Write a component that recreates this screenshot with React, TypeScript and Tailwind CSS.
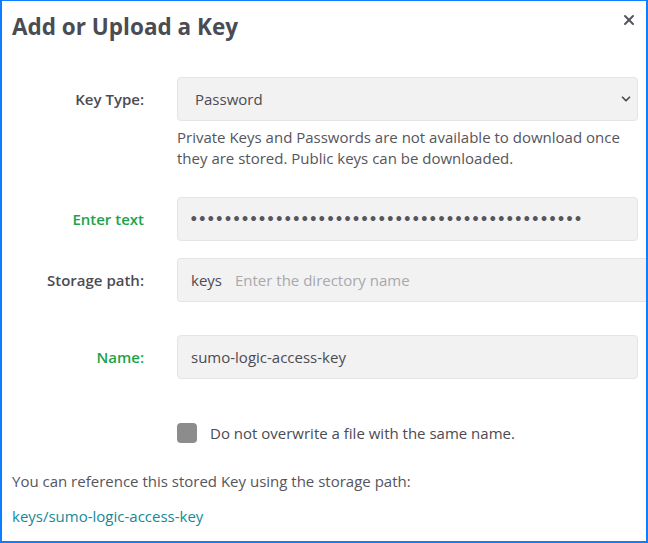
import { ChevronDown, X } from "lucide-react";

const font = { fontFamily: "'Open Sans', Lato, sans-serif" };

function Row({ label, green, children }: { label: string; green?: boolean; children: React.ReactNode }) {
  return (
    <div className="flex items-center">
      <div
        className={`w-[132px] shrink-0 text-right text-[15px] ${green ? "text-[#1aa34a]" : "text-[#4b4b53]"}`}
        style={{ fontWeight: 600 }}
      >
        {label}
      </div>
      <div className="ml-[33px] flex-1">{children}</div>
    </div>
  );
}

export default function App() {
  return (
    <div className="w-[648px] h-[543px] bg-white border-2 border-t border-[#0f7dff] relative overflow-hidden" style={font}>
      {/* Header */}
      <div className="flex items-center justify-between pl-[10px] pr-[9px] pt-[9px]">
        <h1 className="text-[22.5px] text-[#4b4b53]" style={{ fontWeight: 700 }}>Add or Upload a Key</h1>
        <X className="w-4 h-4 text-[#55555c] -mt-[14px]" strokeWidth={3} />
      </div>

      <div className="pl-[10px] pr-[8px] mt-[33px]">
        {/* Key type */}
        <Row label="Key Type:">
          <div className="h-[44px] rounded border border-[#e4e4e4] bg-[#f2f2f2] flex items-center justify-between pl-[17px] pr-[4px] text-[15px] text-[#4b4b53]">
            <span>Password</span>
            <ChevronDown className="w-[14px] h-[14px] text-[#4b4b53]" strokeWidth={3} />
          </div>
        </Row>
        <p className="ml-[165px] mt-[6px] text-[15px] leading-[21px] text-[#55555c]">
          Private Keys and Passwords are not available to download once they are stored. Public keys can be downloaded.
        </p>

        {/* Password */}
        <div className="mt-[28px]">
          <Row label="Enter text" green>
            <div
              className="h-[44px] rounded border border-[#e4e4e4] bg-[#f2f2f2] flex items-center pl-[12px] text-[13px] tracking-[1px] text-[#55555c]"
              style={{ fontFamily: "Lato, sans-serif" }}
            >
              ••••••••••••••••••••••••••••••••••••••••••••••
            </div>
          </Row>
        </div>

        {/* Storage path */}
        <div className="mt-[17px] -mr-[8px]">
          <Row label="Storage path:">
            <div className="h-[44px] rounded-l border border-r-0 border-[#e4e4e4] bg-[#f2f2f2] flex items-center pl-[13px] text-[15px]">
              <span className="text-[#4b4b53]">keys</span>
              <span className="ml-[13px] text-[#a8a8ae]">Enter the directory name</span>
            </div>
          </Row>
        </div>

        {/* Name */}
        <div className="mt-[33px]">
          <Row label="Name:" green>
            <div className="h-[44px] rounded border border-[#e4e4e4] bg-[#f2f2f2] flex items-center pl-[13px] text-[15px] text-[#4b4b53]">
              sumo-logic-access-key
            </div>
          </Row>
        </div>

        {/* Checkbox */}
        <div className="ml-[165px] mt-[43px] flex items-center gap-[13px]">
          <div className="w-[20px] h-[20px] rounded-[4px] bg-[#8c8c8c]" />
          <span className="text-[15px] text-[#4b4b53]">Do not overwrite a file with the same name.</span>
        </div>

        {/* Footer */}
        <p className="mt-[26px] text-[15px] text-[#55555c]">You can reference this stored Key using the storage path:</p>
        <p className="mt-[12px] text-[15px] text-[#138a9a]">keys/sumo-logic-access-key</p>
      </div>
    </div>
  );
}
